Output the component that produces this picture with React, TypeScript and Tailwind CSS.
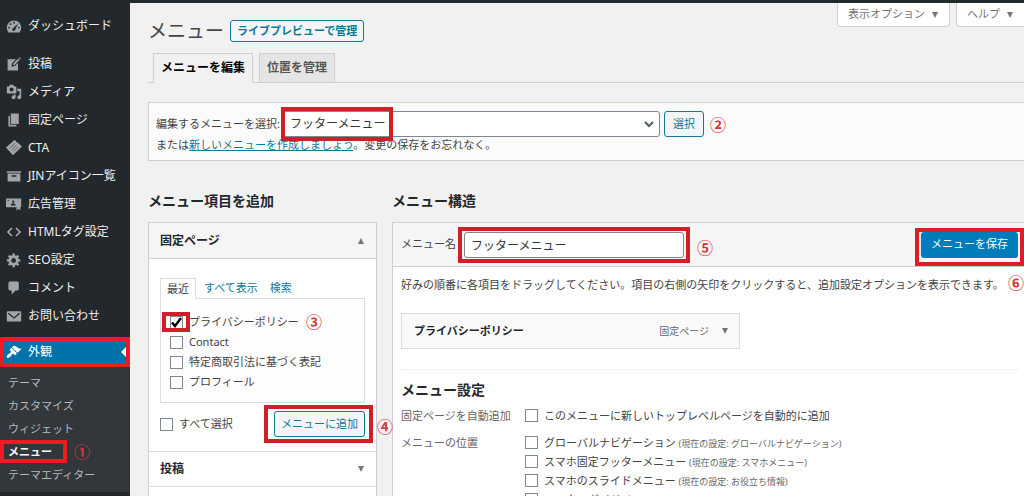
import React from "react";

type IconName =
  | "dashboard" | "post" | "media" | "page" | "ticket" | "archive"
  | "ad" | "code" | "gear" | "comment" | "mail" | "brush";

const shapes: Record<IconName, React.ReactNode> = {
  dashboard: (
    <>
      <path d="M3.2 18h13.6C18.2 16.4 19 14.3 19 12c0-5-4-9-9-9s-9 4-9 9c0 2.3.8 4.4 2.2 6z" />
      <g fill="#23282d">
        <circle cx="10" cy="5.8" r="1.1" />
        <circle cx="5.6" cy="7.6" r="1.1" />
        <circle cx="3.8" cy="12" r="1.1" />
        <circle cx="16.2" cy="12" r="1.1" />
        <path d="M15.2 6.8l-3.7 7.8a1.8 1.8 0 1 1-2.8-1.7z" />
      </g>
    </>
  ),
  post: (
    <>
      <path d="M2 4h10.5L7.6 9l-.9 4.4 4.4-.9L15 8.6V18H2z" />
      <path d="M8.6 11.6l.5-2.2 6-6 1.7 1.7-6 6zM15.8 2.7l1-1 1.8 1.8-1 1z" />
    </>
  ),
  media: (
    <path d="M13 11V4c0-.55-.45-1-1-1h-1.67L9 1H5L3.67 3H2c-.55 0-1 .45-1 1v7c0 .55.45 1 1 1h10c.55 0 1-.45 1-1zM7 4.5c1.38 0 2.5 1.12 2.5 2.5S8.38 9.5 7 9.5 4.5 8.38 4.5 7 5.62 4.5 7 4.5zM14 6h5v10.5c0 1.38-1.12 2.5-2.5 2.5S14 17.88 14 16.5s1.12-2.5 2.5-2.5c.17 0 .34.02.5.05V9h-3V6zm-4 8.05V13h2v3.5c0 1.38-1.12 2.5-2.5 2.5S7 17.88 7 16.5 8.12 14 9.5 14c.17 0 .34.02.5.05z" />
  ),
  page: <path d="M6 15V2h10v13H6zm-1 1h8v2H3V5h2v11z" />,
  ticket: (
    <>
      <path d="M0 9.5L10.5 0l2.2 1.3c-.4 1 .6 2.2 1.8 1.8L20 8 8.6 19z" />
      <path d="M5 9.8l6-5.4M7 12l6-5.4M9 14.2l6-5.4" stroke="#23282d" strokeWidth=".6" fill="none" />
    </>
  ),
  archive: <path d="M19 4v2H1V4h18zM2 7h16v10H2V7zm11 4V9H7v2h6z" />,
  ad: (
    <>
      <path d="M0 3h19v11h-1.4l.6 4-2.7-1.6-2.7 1.6.5-4H0z" />
      <g fill="#23282d">
        <circle cx="9" cy="7" r="1.5" />
        <path d="M6 12c0-1.8 1.2-2.8 3-2.8s3 1 3 2.8zM2 5h2v1H2z" />
      </g>
    </>
  ),
  code: <path d="M7.5 5L2.5 10l5 5M12.5 5l5 5-5 5" fill="none" stroke="currentColor" strokeWidth="2.2" />,
  gear: (
    <path d="M18 12h-2.18c-.17.7-.44 1.35-.81 1.93l1.54 1.54-2.1 2.1-1.54-1.54c-.58.36-1.23.63-1.91.79V19H8v-2.18c-.68-.16-1.33-.43-1.91-.79l-1.54 1.54-2.12-2.12 1.54-1.54c-.36-.58-.63-1.23-.79-1.91H1V9.03h2.17c.16-.7.44-1.35.8-1.94L2.43 5.55l2.1-2.1 1.54 1.54c.58-.37 1.24-.64 1.93-.81V2h3v2.18c.68.16 1.33.43 1.91.79l1.54-1.54 2.12 2.12-1.54 1.54c.36.59.64 1.24.8 1.94H18V12zm-8.5 1.5c1.66 0 3-1.34 3-3s-1.34-3-3-3-3 1.34-3 3 1.34 3 3 3z" />
  ),
  comment: <path d="M5 2h9c1.1 0 2 .9 2 2v7c0 1.1-.9 2-2 2h-2l-5 5v-5H5c-1.1 0-2-.9-2-2V4c0-1.1.9-2 2-2z" />,
  mail: (
    <>
      <path d="M2 4h16c.6 0 1 .4 1 1v11c0 .6-.4 1-1 1H2c-.6 0-1-.4-1-1V5c0-.6.4-1 1-1z" />
      <path d="M3 6.5l7 6 7-6" fill="none" stroke="#23282d" strokeWidth="1.6" />
    </>
  ),
  brush: (
    <path d="M14.48 11.06L7.41 3.99l1.5-1.5c.5-.56 2.3-.47 3.51.32 1.21.8 1.43 1.28 2.91 2.1 1.18.64 2.45 1.26 4.45.85zm-.71.71L6.7 4.7 4.93 6.47c-.39.39-.39 1.02 0 1.41l1.06 1.06c.39.39.39 1.03 0 1.42-.6.6-1.43 1.11-2.21 1.69-.35.26-.7.53-1.01.84C1.43 14.23.4 16.08 1.4 17.07c.99 1 2.84-.03 4.18-1.36.31-.31.58-.66.85-1.02.57-.78 1.08-1.61 1.69-2.21.39-.39 1.02-.39 1.41 0l1.06 1.06c.39.39 1.02.39 1.41 0z" />
  ),
};

function Icon({ name }: { name: IconName }) {
  return (
    <svg viewBox="0 0 20 20" className="size-4 shrink-0 fill-current" aria-hidden="true">
      {shapes[name]}
    </svg>
  );
}

function Caret({ up = false }: { up?: boolean }) {
  return (
    <svg viewBox="0 0 8 8" className="size-2 shrink-0 fill-[#72777c]" aria-hidden="true">
      <path d={up ? "M1 7h6L4 1z" : "M1 1h6L4 7z"} />
    </svg>
  );
}

/* Red frame laid over a control; the caller gives its extent. */
function Frame({ className }: { className: string }) {
  return <span aria-hidden="true" className={`pointer-events-none absolute z-10 border-4 ${className}`} />;
}

function Step({ className, children }: { className: string; children: string }) {
  return (
    <span className={`pointer-events-none absolute z-10 text-base leading-4 font-bold text-[#d5363c] ${className}`}>
      {children}
    </span>
  );
}

function Check({ checked = false, children }: { checked?: boolean; children: React.ReactNode }) {
  return (
    <label className="flex items-center gap-1.5">
      <input
        type="checkbox"
        defaultChecked={checked}
        className="peer size-[13px] shrink-0 appearance-none border border-[#7e8993] bg-white"
      />
      <svg
        viewBox="0 0 13 13"
        aria-hidden="true"
        className="pointer-events-none -ml-[19px] hidden size-[13px] shrink-0 fill-none stroke-black stroke-[2.4] peer-checked:block"
      >
        <path d="M2 6.5l3 3.5 6-8" />
      </svg>
      <span className="whitespace-nowrap">{children}</span>
    </label>
  );
}

const outlineButton =
  "rounded-[3px] border border-[#10789b] bg-[#f3f5f6] text-center whitespace-nowrap text-[#10789b]";

const navItems: [IconName, string][] = [
  ["post", "投稿"],
  ["media", "メディア"],
  ["page", "固定ページ"],
  ["ticket", "CTA"],
  ["archive", "JINアイコン一覧"],
  ["ad", "広告管理"],
  ["code", "HTMLタグ設定"],
  ["gear", "SEO設定"],
  ["comment", "コメント"],
  ["mail", "お問い合わせ"],
];

function NavItem({ icon, label }: { icon: IconName; label: string }) {
  return (
    <li>
      <a href="#" className="flex h-7 items-center gap-1.5 pl-1.5 whitespace-nowrap text-[#eeeeee]">
        <span className="flex text-[#a0a5aa]">
          <Icon name={icon} />
        </span>
        {label}
      </a>
    </li>
  );
}

function Sidebar() {
  return (
    <nav className="w-[130px] shrink-0 bg-[#23282d] pt-[9px] text-xs">
      <ul>
        <NavItem icon="dashboard" label="ダッシュボード" />
      </ul>
      <ul className="mt-2.5">
        {navItems.map(([icon, label]) => (
          <NavItem key={label} icon={icon} label={label} />
        ))}
      </ul>
      <div className="relative mt-[7px]">
        <a href="#" className="flex h-[30px] items-center gap-1.5 bg-[#0073aa] pl-1.5 text-white">
          <Icon name="brush" />
          外観
          <svg viewBox="0 0 6 12" className="mr-[3px] ml-auto h-3 w-1.5 fill-white" aria-hidden="true">
            <path d="M6 0v12L0 6z" />
          </svg>
        </a>
        <Frame className="inset-0 border-[#ed1c24]" />
      </div>
      <ul className="bg-[#32373c] pt-1 pb-1.5 text-[11px] leading-[23px] text-[#b4b9be]">
        <li className="pl-2"><a href="#">テーマ</a></li>
        <li className="pl-2"><a href="#">カスタマイズ</a></li>
        <li className="pl-2"><a href="#">ウィジェット</a></li>
        <li className="relative pl-2 font-bold text-white">
          <a href="#">メニュー</a>
          <Frame className="inset-y-0 left-0 w-[67px] border-[#ed1c24]" />
          <Step className="top-1 left-[74px]">①</Step>
        </li>
        <li className="pl-2"><a href="#">テーマエディター</a></li>
      </ul>
    </nav>
  );
}

function Header() {
  return (
    <header className="flex items-start">
      <div className="flex items-center gap-1.5 pt-3.5">
        <h1 className="text-[19px] leading-7">メニュー</h1>
        <a href="#" className={`${outlineButton} px-1.5 text-[11px] leading-5 font-bold`}>
          ライブプレビューで管理
        </a>
      </div>
      <div className="ml-auto flex gap-1.5 text-[11px] text-[#72777c]">
        <button type="button" className="flex h-6 items-center gap-1.5 rounded-b border border-t-0 border-[#ccd0d4] bg-white px-2.5">
          表示オプション <Caret />
        </button>
        <button type="button" className="flex h-6 items-center gap-1.5 rounded-bl border border-t-0 border-r-0 border-[#ccd0d4] bg-white px-2.5">
          ヘルプ <Caret />
        </button>
      </div>
    </header>
  );
}

function MenuPicker() {
  return (
    <section className="mt-[19px] border border-r-0 border-[#ccd0d4] bg-[#fbfbfb] px-[7px] pt-2 pb-[7px]">
      <div className="flex items-center">
        <label htmlFor="menu-select" className="whitespace-nowrap">編集するメニューを選択:</label>
        <div className="relative ml-px w-[379px]">
          <select
            id="menu-select"
            className="block h-[26px] w-full appearance-none rounded-[3px] border border-[#7e8993] bg-white pr-6 pl-2 text-xs text-[#32373c]"
          >
            <option>フッターメニュー</option>
          </select>
          <svg viewBox="0 0 10 10" className="pointer-events-none absolute top-2 right-1.5 size-2.5 fill-none stroke-[#555d66] stroke-2" aria-hidden="true">
            <path d="M1 3l4 4 4-4" />
          </svg>
          <Frame className="-top-1 -bottom-1 left-0 w-[112px] border-[#cd2027]" />
        </div>
        <div className="relative ml-1">
          <button type="button" className={`${outlineButton} h-[26px] w-10`}>選択</button>
          <Step className="top-1.5 left-[46px]">②</Step>
        </div>
      </div>
      <p className="leading-4">
        または
        <a href="#" className="text-[#10789b] underline">新しいメニューを作成しましょう</a>
        。変更の保存をお忘れなく。
      </p>
    </section>
  );
}

function AddItems() {
  return (
    <section className="w-[229px] shrink-0">
      <h2 className="text-sm leading-5 font-bold text-[#23282d]">メニュー項目を追加</h2>
      <div className="mt-[11px] border border-[#ccd0d4] bg-white">
        <button type="button" className="flex h-9 w-full items-center justify-between border-b border-[#ccd0d4] bg-[#f5f5f5] px-[11px] text-xs font-bold text-[#23282d]">
          固定ページ <Caret up />
        </button>
        <div className="px-[11px] pt-[19px] pb-3.5">
          <div className="flex leading-5">
            <button type="button" className="relative z-[1] -mb-px border border-b-0 border-[#dddddd] bg-[#fdfdfd] px-1.5">最近</button>
            <button type="button" className="ml-2 text-[#10789b]">すべて表示</button>
            <button type="button" className="ml-3 text-[#10789b]">検索</button>
          </div>
          <div className="h-[105px] border border-[#dddddd] bg-[#fdfdfd] px-[9px] pt-[13px] leading-5">
            <div className="relative">
              <Check checked>プライバシーポリシー</Check>
              <Frame className="-inset-y-0 -left-2 w-7 border-[#cd2027]" />
              <Step className="top-0.5 left-[136px]">③</Step>
            </div>
            <Check>Contact</Check>
            <Check>特定商取引法に基づく表記</Check>
            <Check>プロフィール</Check>
          </div>
          <div className="mt-2 flex items-center justify-between">
            <Check>すべて選択</Check>
            <div className="relative">
              <button type="button" className={`${outlineButton} h-[26px] px-1.5`}>メニューに追加</button>
              <Frame className="-inset-y-1.5 -right-2 -left-2.5 border-[#cd2027]" />
              <Step className="top-2 left-[103px]">④</Step>
            </div>
          </div>
        </div>
        <button type="button" className="flex h-9 w-full items-center justify-between border-y border-[#dddddd] px-[11px] text-xs font-bold text-[#23282d]">
          投稿 <Caret />
        </button>
        <div className="h-9" />
      </div>
    </section>
  );
}

const locations: [string, string][] = [
  ["グローバルナビゲーション", "(現在の設定: グローバルナビゲーション)"],
  ["スマホ固定フッターメニュー", "(現在の設定: スマホメニュー)"],
  ["スマホのスライドメニュー", "(現在の設定: お役立ち情報)"],
  ["フッターガイドメニュー", "(現在の設定: フッターガイド)"],
];

function Structure() {
  return (
    <section className="min-w-0 flex-1">
      <h2 className="text-sm leading-5 font-bold text-[#23282d]">メニュー構造</h2>
      <div className="mt-[11px] border border-r-0 border-[#ccd0d4] bg-white">
        <div className="flex h-11 items-center border-b border-[#ccd0d4] bg-[#f5f5f5] pr-1.5 pl-2">
          <label htmlFor="menu-name" className="whitespace-nowrap">メニュー名</label>
          <div className="relative ml-2 w-[220px]">
            <input
              id="menu-name"
              type="text"
              defaultValue="フッターメニュー"
              className="block h-[26px] w-full rounded-[3px] border border-[#7e8993] bg-white px-1.5 text-xs text-[#32373c]"
            />
            <Frame className="-inset-x-1.5 -inset-y-[5px] border-[#cd2027]" />
            <Step className="top-2 left-[233px]">⑤</Step>
          </div>
          <div className="relative ml-auto">
            <button type="button" className="block h-[26px] rounded-[3px] bg-[#007cba] px-2.5 whitespace-nowrap text-white">
              メニューを保存
            </button>
            <Frame className="-inset-x-1.5 -top-1 -bottom-2 border-[#dc1f27]" />
          </div>
        </div>
        <div className="pr-1.5 pl-2">
          <div className="relative pt-2.5">
            <p className="leading-4 whitespace-nowrap">
              好みの順番に各項目をドラッグしてください。項目の右側の矢印をクリックすると、追加設定オプションを表示できます。
            </p>
            <Step className="top-2 -right-1.5">⑥</Step>
          </div>
          <div className="mt-5 flex h-9 w-[339px] items-center border border-[#dddddd] bg-[#fafafa] px-3">
            <strong className="text-[#23282d]">プライバシーポリシー</strong>
            <span className="ml-auto text-[10px] text-[#666666]">固定ページ</span>
            <button type="button" aria-label="プライバシーポリシーを編集" className="ml-2 -mr-1.5 p-1">
              <Caret />
            </button>
          </div>
          <div className="mt-5 border-t border-[#eeeeee] pt-2.5">
            <h3 className="text-sm leading-5 font-bold text-[#23282d]">メニュー設定</h3>
            <fieldset className="mt-1.5 flex leading-[19px]">
              <legend className="float-left w-[124px] text-[#666666]">固定ページを自動追加</legend>
              <Check>このメニューに新しいトップレベルページを自動的に追加</Check>
            </fieldset>
            <fieldset className="mt-2 flex leading-[19px]">
              <legend className="float-left w-[124px] text-[#666666]">メニューの位置</legend>
              <div>
                {locations.map(([name, current]) => (
                  <Check key={name}>
                    {name} <span className="text-[9px] leading-none text-[#666666]">{current}</span>
                  </Check>
                ))}
              </div>
            </fieldset>
          </div>
        </div>
      </div>
    </section>
  );
}

export default function App() {
  return (
    <div className="flex h-screen flex-col overflow-hidden bg-[#f1f1f1] font-['Noto_Sans','Noto_Sans_CJK_JP',sans-serif] text-[11px] text-[#444444]">
      <div className="h-[3px] shrink-0 bg-[#23282d]" />
      <div className="flex min-h-0 flex-1">
        <Sidebar />
        <main className="min-w-0 flex-1 pl-[18px]">
          <Header />
          <div className="mt-2 flex gap-1.5 border-b border-[#ccd0d4] pl-[5px] text-xs leading-7 font-bold">
            <a href="#" className="-mb-px border border-b-0 border-[#ccd0d4] bg-[#f1f1f1] px-[7px] text-black">
              メニューを編集
            </a>
            <a href="#" className="border border-b-0 border-[#ccd0d4] bg-[#e5e5e5] px-[7px] text-[#555555]">
              位置を管理
            </a>
          </div>
          <MenuPicker />
          <div className="mt-[30px] flex gap-[15px]">
            <AddItems />
            <Structure />
          </div>
        </main>
      </div>
    </div>
  );
}
